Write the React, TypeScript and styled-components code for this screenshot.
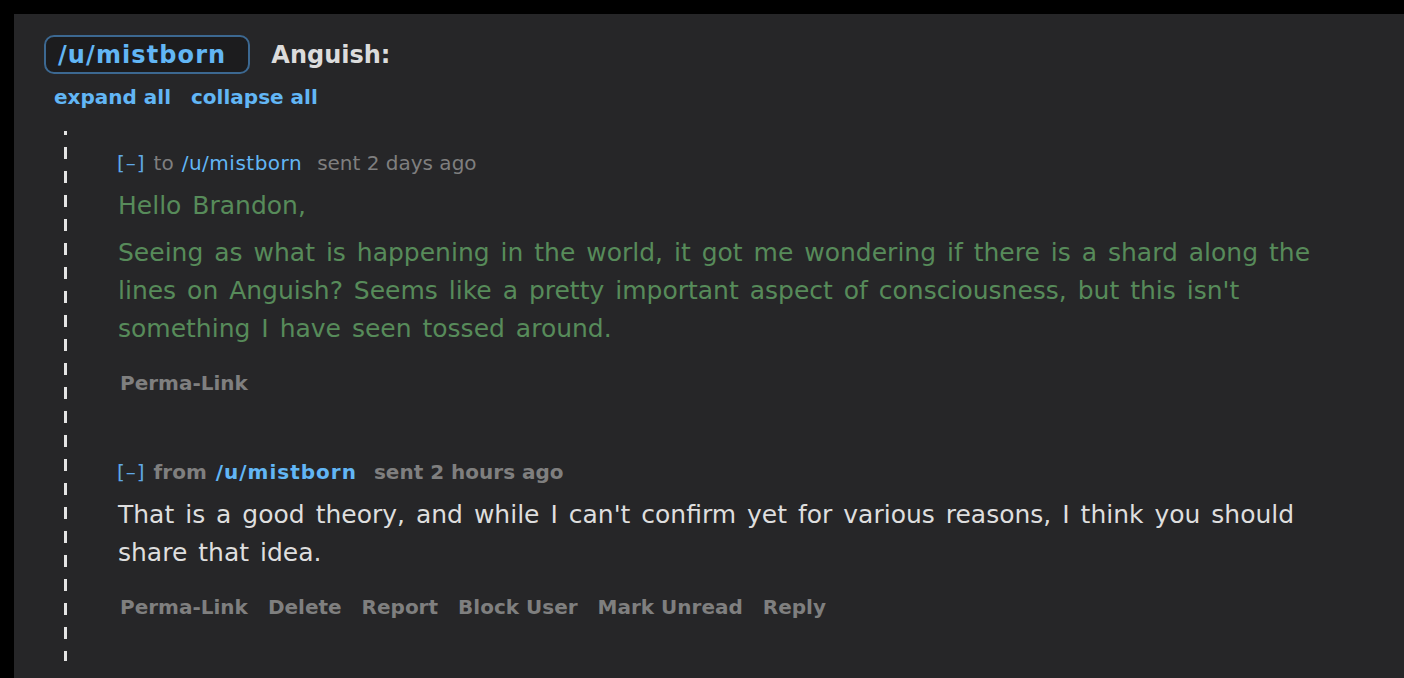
import React from "react";
import styled, { createGlobalStyle } from "styled-components";

const Global = createGlobalStyle`
  html, body { margin: 0; padding: 0; background: #000; }
  body { font-family: "DejaVu Sans", Verdana, sans-serif; }
`;

const Panel = styled.div`
  margin: 14px 0 0 14px;
  background: #262628;
  min-height: 664px;
  padding: 21px 0 0 30px;
  box-sizing: border-box;
`;

const HeaderRow = styled.div`
  display: flex;
  align-items: center;
  gap: 21px;
`;

const UserPill = styled.a`
  display: inline-flex;
  align-items: center;
  height: 39px;
  box-sizing: border-box;
  padding: 0 22px 0 12px;
  border: 2px solid #3c6891;
  border-radius: 10px;
  background: #1c1c1e;
  color: #62b6f5;
  font-weight: bold;
  font-size: 24px;
  letter-spacing: 1.1px;
  text-decoration: none;
`;

const Title = styled.span`
  color: #dcdcdc;
  font-weight: bold;
  font-size: 24px;
`;

const ToggleRow = styled.div`
  display: flex;
  gap: 20px;
  padding-left: 10px;
  margin-top: 11px;
`;

const BlueLink = styled.a`
  color: #62b6f5;
  font-weight: bold;
  font-size: 20px;
  text-decoration: none;
`;

const Thread = styled.div`
  margin: 22px 0 0 20px;
  background-image: repeating-linear-gradient(
    to bottom,
    #e4e4e4 0 12px,
    transparent 12px 24px
  );
  background-size: 3px calc(100% + 8px);
  background-repeat: no-repeat;
  background-position: 0 -8px;
`;

const Message = styled.div<{ $pb: number }>`
  padding: 20px 0 ${(p) => p.$pb}px 54px;
`;

const Meta = styled.div<{ $bold?: boolean }>`
  font-size: 20px;
  line-height: 24px;
  color: #7f7f7f;
  font-weight: ${(p) => (p.$bold ? "bold" : "normal")};
  display: flex;
  gap: 8px;
  align-items: baseline;
  margin-left: -1px;
`;

const Collapse = styled.span`
  color: #5fa8e6;
  font-weight: normal;
  letter-spacing: 1px;
`;

const MetaUser = styled.a<{ $bold?: boolean }>`
  color: #62b6f5;
  text-decoration: none;
  letter-spacing: ${(p) => (p.$bold ? "1px" : "0.5px")};
  margin-left: ${(p) => (p.$bold ? "1px" : "0")};
`;

const Sent = styled.span<{ $bold?: boolean }>`
  margin-left: ${(p) => (p.$bold ? "9px" : "7px")};
`;

const Body = styled.div<{ $tone: "green" | "white" }>`
  margin-top: 12px;
  color: ${(p) => (p.$tone === "green" ? "#578b5a" : "#dedede")};
  font-size: 25px;
  line-height: 38px;
  word-spacing: 3px;
  max-width: 1220px;
  p { margin: 0 0 9px 0; }
  p:last-child { margin-bottom: 0; }
`;

const Actions = styled.div`
  display: flex;
  gap: 20px;
  margin-top: 23px;
  padding-left: 2px;
`;

const Action = styled.a`
  color: #7f7f7f;
  font-weight: bold;
  font-size: 20px;
  text-decoration: none;
  line-height: 24px;
`;

export default function App() {
  return (
    <>
      <Global />
      <Panel>
        <HeaderRow>
          <UserPill>/u/mistborn</UserPill>
          <Title>Anguish:</Title>
        </HeaderRow>
        <ToggleRow>
          <BlueLink>expand all</BlueLink>
          <BlueLink>collapse all</BlueLink>
        </ToggleRow>
        <Thread>
          <Message $pb={45}>
            <Meta>
              <Collapse>[–]</Collapse>
              <span>to</span>
              <MetaUser>/u/mistborn</MetaUser>
              <Sent>sent 2 days ago</Sent>
            </Meta>
            <Body $tone="green">
              <p>Hello Brandon,</p>
              <p>
                Seeing as what is happening in the world, it got me wondering if there is a shard along the
                lines on Anguish? Seems like a pretty important aspect of consciousness, but this isn't
                something I have seen tossed around.
              </p>
            </Body>
            <Actions>
              <Action>Perma-Link</Action>
            </Actions>
          </Message>
          <Message $pb={42}>
            <Meta $bold>
              <Collapse>[–]</Collapse>
              <span>from</span>
              <MetaUser $bold>/u/mistborn</MetaUser>
              <Sent $bold>sent 2 hours ago</Sent>
            </Meta>
            <Body $tone="white">
              <p>
                That is a good theory, and while I can't confirm yet for various reasons, I think you should
                share that idea.
              </p>
            </Body>
            <Actions>
              <Action>Perma-Link</Action>
              <Action>Delete</Action>
              <Action>Report</Action>
              <Action>Block User</Action>
              <Action>Mark Unread</Action>
              <Action>Reply</Action>
            </Actions>
          </Message>
        </Thread>
      </Panel>
    </>
  );
}
